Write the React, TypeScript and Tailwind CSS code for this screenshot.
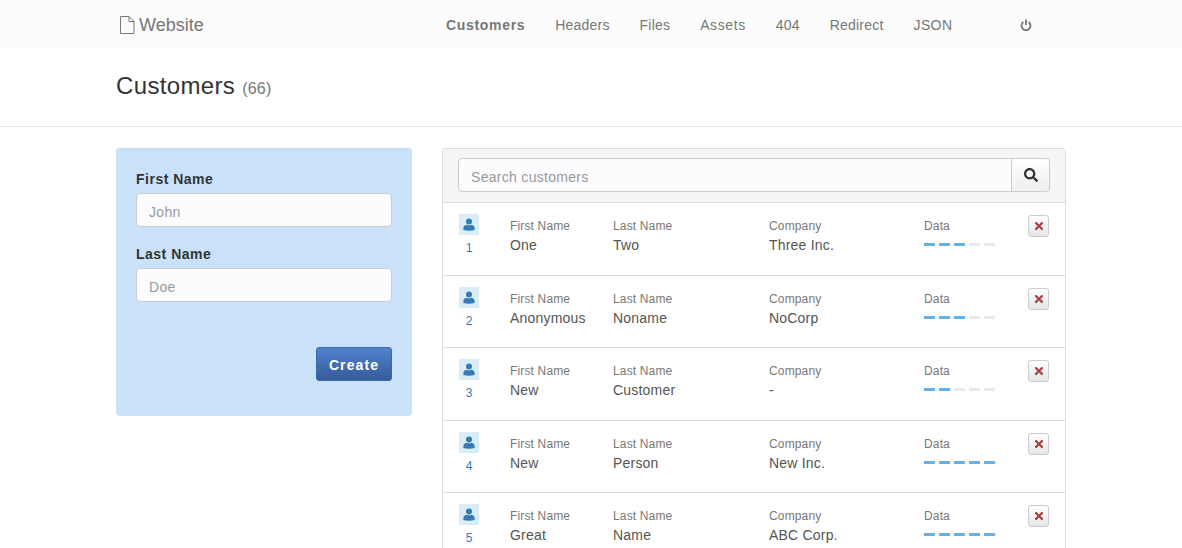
import { FaSearch, FaTimes } from "react-icons/fa";

const customers = [
  { id: 1, first: "One", last: "Two", company: "Three Inc.", data: 3 },
  { id: 2, first: "Anonymous", last: "Noname", company: "NoCorp", data: 3 },
  { id: 3, first: "New", last: "Customer", company: "-", data: 2 },
  { id: 4, first: "New", last: "Person", company: "New Inc.", data: 5 },
  { id: 5, first: "Great", last: "Name", company: "ABC Corp.", data: 5 },
];

const navItems = [
  { label: "Headers", className: "tracking-[0.2px]" },
  { label: "Files", className: "tracking-[0.2px]" },
  { label: "Assets", className: "tracking-[0.6px]" },
  { label: "404", className: "tracking-[0.2px]" },
  { label: "Redirect", className: "tracking-[0.2px]" },
  { label: "JSON", className: "tracking-[0.4px]" },
];

function UserIcon() {
  return (
    <svg viewBox="0 0 12 13" className="h-[13px] w-3 fill-[#337ab7]">
      <circle cx="6" cy="3.4" r="3" />
      <path d="M0.4 12V10C0.4 8.2 2 7.1 3.6 6.7C4.4 7.5 7.6 7.5 8.4 6.7C10 7.1 11.6 8.2 11.6 10V12C8 13 4 13 0.4 12Z" />
    </svg>
  );
}

function PowerIcon() {
  return (
    <svg viewBox="0 0 12 12" className="ml-[38px] h-3 w-3 fill-none stroke-[#777] stroke-[1.8]">
      <path d="M3.4 3A4.5 4.5 0 1 0 8.6 3" />
      <path d="M6 0.5V6" />
    </svg>
  );
}

function Field({ label, value, className }: { label: string; value: string; className: string }) {
  return (
    <div className={className}>
      <div className="text-xs leading-[14px] tracking-[0.15px] text-[#777]">{label}</div>
      <div className="mt-[2px] text-sm leading-5 tracking-[0.2px] text-[#555]">{value}</div>
    </div>
  );
}

function CustomerRow({ id, first, last, company, data }: (typeof customers)[number]) {
  return (
    <div className="flex h-[72.6px] shrink-0 border-t border-[#ddd] pl-[16px] pt-[11px]">
      <div className="flex w-[20px] flex-col items-center">
        <div className="flex h-[21px] w-[20px] items-center justify-center bg-[#d9edf7]">
          <UserIcon />
        </div>
        <div className="mt-[6px] text-xs leading-[14px] text-[#337ab7]">{id}</div>
      </div>
      <Field label="First Name" value={first} className="ml-[31px] w-[103px] pt-[5px]" />
      <Field label="Last Name" value={last} className="w-[156px] pt-[5px]" />
      <Field label="Company" value={company} className="w-[155px] pt-[5px]" />
      <div className="w-[104px] pt-[5px]">
        <div className="text-xs leading-[14px] tracking-[0.15px] text-[#777]">Data</div>
        <div className="mt-[10px] flex gap-[4px]">
          {[1, 2, 3, 4, 5].map((n) => (
            <span key={n} className={n <= data ? "h-[3px] w-[11px] bg-[#66b0ea]" : "h-[3px] w-[11px] bg-[#e9e9e9]"} />
          ))}
        </div>
      </div>
      <button className="mt-[1px] flex h-[22px] w-[21px] items-center justify-center rounded-[3px] border border-[#ccc] bg-gradient-to-b from-white to-[#e6e6e6] text-[12px] text-[#a94442]">
        <FaTimes />
      </button>
    </div>
  );
}

export default function App() {
  return (
    <div className="h-[548px] overflow-hidden bg-white font-['Liberation_Sans',Arial,sans-serif]">
      <nav className="h-[49px] bg-[#fcfcfc]">
        <div className="mx-auto flex h-full w-[950px] items-center">
          <div className="flex w-[330px] items-center pl-[3px] text-lg text-[#777]">
            <svg viewBox="0 0 16 18" className="mr-[4px] h-[18px] w-[16px] fill-none stroke-[#777]">
              <path d="M1.5 0.5H10L15 5.5V17.5H1.5Z M10 0.5V5.5H15" />
            </svg>
            Website
          </div>
          <div className="flex items-center gap-[30px] text-sm text-[#777]">
            <span className="font-bold tracking-[0.68px]">Customers</span>
            {navItems.map((item) => (
              <span key={item.label} className={item.className}>
                {item.label}
              </span>
            ))}
            <PowerIcon />
          </div>
        </div>
      </nav>

      <header className="h-[78px] border-b border-[#e7e7e7]">
        <div className="mx-auto w-[950px] pt-[19px] text-2xl leading-[36px] tracking-[0.35px] text-[#333]">
          Customers <small className="text-base tracking-[0.2px] text-[#777]">(66)</small>
        </div>
      </header>

      <main className="mx-auto flex w-[950px] items-start gap-[30px] pt-[21px]">
        <form className="flex h-[268px] w-[296px] shrink-0 flex-col rounded-[4px] border-t border-[#c0dcf5] bg-[#c9e2fa] px-[20px] pt-[22px]">
          <label className="text-sm leading-4 font-bold tracking-[0.5px] text-[#333]">First Name</label>
          <input
            placeholder="John"
            className="mt-[6px] h-[34px] rounded-[4px] border border-[#ccc] bg-[#fcfcff] px-3 pt-[4px] text-sm tracking-[0.3px] placeholder:text-[#999]"
          />
          <label className="mt-[19px] text-sm leading-4 font-bold tracking-[0.5px] text-[#333]">Last Name</label>
          <input
            placeholder="Doe"
            className="mt-[6px] h-[34px] rounded-[4px] border border-[#ccc] bg-[#fcfcff] px-3 pt-[4px] text-sm tracking-[0.3px] placeholder:text-[#999]"
          />
          <button
            type="button"
            className="mt-[45px] h-[34px] w-[76px] self-end rounded-[3px] border border-[#3b6aa8] bg-gradient-to-b from-[#4f82cf] to-[#375c99] pt-[2px] text-sm font-bold tracking-[1.1px] text-white"
          >
            Create
          </button>
        </form>

        <section className="w-[624px] shrink-0 rounded-t-[4px] border-x border-t border-[#ddd]">
          <div className="flex h-[53px] bg-[#f5f5f5] px-[15px] pt-[9px]">
            <input
              placeholder="Search customers"
              className="h-[34px] min-w-0 flex-1 rounded-l-[4px] border border-[#ccc] bg-[#fcfcff] px-3 pt-[4px] text-sm tracking-[0.3px] placeholder:text-[#999]"
            />
            <button className="-ml-px flex h-[34px] w-[39px] items-center justify-center rounded-r-[4px] border border-[#ccc] bg-gradient-to-b from-white to-[#eee] text-[14px] text-[#333]">
              <FaSearch />
            </button>
          </div>
          {customers.map((c) => (
            <CustomerRow key={c.id} {...c} />
          ))}
        </section>
      </main>
    </div>
  );
}
